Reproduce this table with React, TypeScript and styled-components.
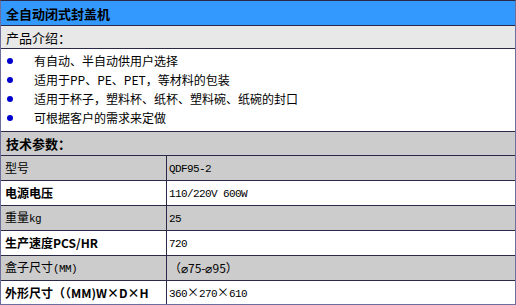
import React from "react";
import styled, { createGlobalStyle } from "styled-components";

const Global = createGlobalStyle`
  html, body { margin: 0; padding: 0; background: #ffffff; }
  body { font-family: "Noto Sans CJK SC", "Liberation Sans", sans-serif; color: #000; }
`;

const Table = styled.div`
  box-sizing: border-box;
  width: 516px;
  height: 305px;
  border: 1px solid #6e6e9c;
  border-top-color: #2a2a48;
  display: flex;
  flex-direction: column;
  overflow: hidden;
`;

const Band = styled.div<{ $bg: string; $h: number; $size?: number; $bold?: boolean }>`
  box-sizing: border-box;
  height: ${(p) => p.$h}px;
  flex: none;
  background: ${(p) => p.$bg};
  border-bottom: 1px solid #2a2a48;
  display: flex;
  align-items: center;
  padding-left: 5px;
  font-size: ${(p) => p.$size ?? 13}px;
  font-weight: ${(p) => (p.$bold ? 700 : 400)};
  line-height: 1;
  white-space: nowrap;
`;

const List = styled.ul`
  box-sizing: border-box;
  height: 83px;
  flex: none;
  margin: 0;
  padding: 2px 0 0 0;
  list-style: none;
  background: #ffffff;
  border-bottom: 1px solid #2a2a48;
  display: flex;
  flex-direction: column;
`;

const Item = styled.li`
  height: 19px;
  display: flex;
  align-items: center;
  font-size: 12px;
  line-height: 1;
  white-space: nowrap;
`;

const Dot = styled.span`
  width: 6px;
  height: 6px;
  border-radius: 50%;
  background: #0000cc;
  margin: 0 21px 0 6px;
  flex: none;
`;

const Spec = styled.div<{ $bg: string; $last?: boolean }>`
  box-sizing: border-box;
  height: ${(p) => (p.$last ? 23 : 25)}px;
  flex: none;
  display: grid;
  grid-template-columns: 166px 1fr;
  background: ${(p) => p.$bg};
  border-bottom: ${(p) => (p.$last ? "none" : "1px solid #2a2a48")};
`;

const Cell = styled.div<{ $bold?: boolean; $right?: boolean }>`
  display: flex;
  align-items: center;
  padding-left: ${(p) => (p.$right ? 2 : 4)}px;
  font-size: 12px;
  font-weight: ${(p) => (p.$bold ? 700 : 400)};
  line-height: 1;
  white-space: nowrap;
  border-right: ${(p) => (p.$right ? "none" : "1px solid #2a2a48")};
`;

const Text = styled.span`
  display: inline-block;
  line-height: 14px;
`;

const Latin = styled.span`
  font-family: "Liberation Mono", monospace;
  font-size: 11px;
  letter-spacing: -0.6px;
`;

const bullets = [
  "有自动、半自动供用户选择",
  "适用于PP、PE、PET，等材料的包装",
  "适用于杯子，塑料杯、纸杯、塑料碗、纸碗的封口",
  "可根据客户的需求来定做",
];

type Row = { k: React.ReactNode; v: React.ReactNode; bold?: boolean; bg: string };

const rows: Row[] = [
  { k: "型号", v: <Latin>QDF95-2</Latin>, bg: "#cccccc" },
  { k: "电源电压", v: <Latin>110/220V 600W</Latin>, bold: true, bg: "#ffffff" },
  { k: <>重量<Latin>kg</Latin></>, v: <Latin>25</Latin>, bg: "#cccccc" },
  { k: "生产速度PCS/HR", v: <Latin>720</Latin>, bold: true, bg: "#ffffff" },
  { k: <>盒子尺寸<Latin>(MM)</Latin></>, v: "（⌀75-⌀95）", bg: "#cccccc" },
  { k: "外形尺寸（（MM)W×D×H", v: <><Latin>360</Latin>×<Latin>270</Latin>×<Latin>610</Latin></>, bold: true, bg: "#ffffff" },
];

export default function App() {
  return (
    <>
      <Global />
      <Table>
        <Band $bg="#3399ff" $h={25} $bold>全自动闭式封盖机</Band>
        <Band $bg="#e8e8e8" $h={23}>产品介绍：</Band>
        <List>
          {bullets.map((b) => (
            <Item key={b}>
              <Dot />
              {b}
            </Item>
          ))}
        </List>
        <Band $bg="#cccccc" $h={24} $bold>技术参数：</Band>
        {rows.map((r, i) => (
          <Spec key={i} $bg={r.bg} $last={i === rows.length - 1}>
            <Cell $bold={r.bold}><Text>{r.k}</Text></Cell>
            <Cell $right><Text>{r.v}</Text></Cell>
          </Spec>
        ))}
      </Table>
    </>
  );
}
